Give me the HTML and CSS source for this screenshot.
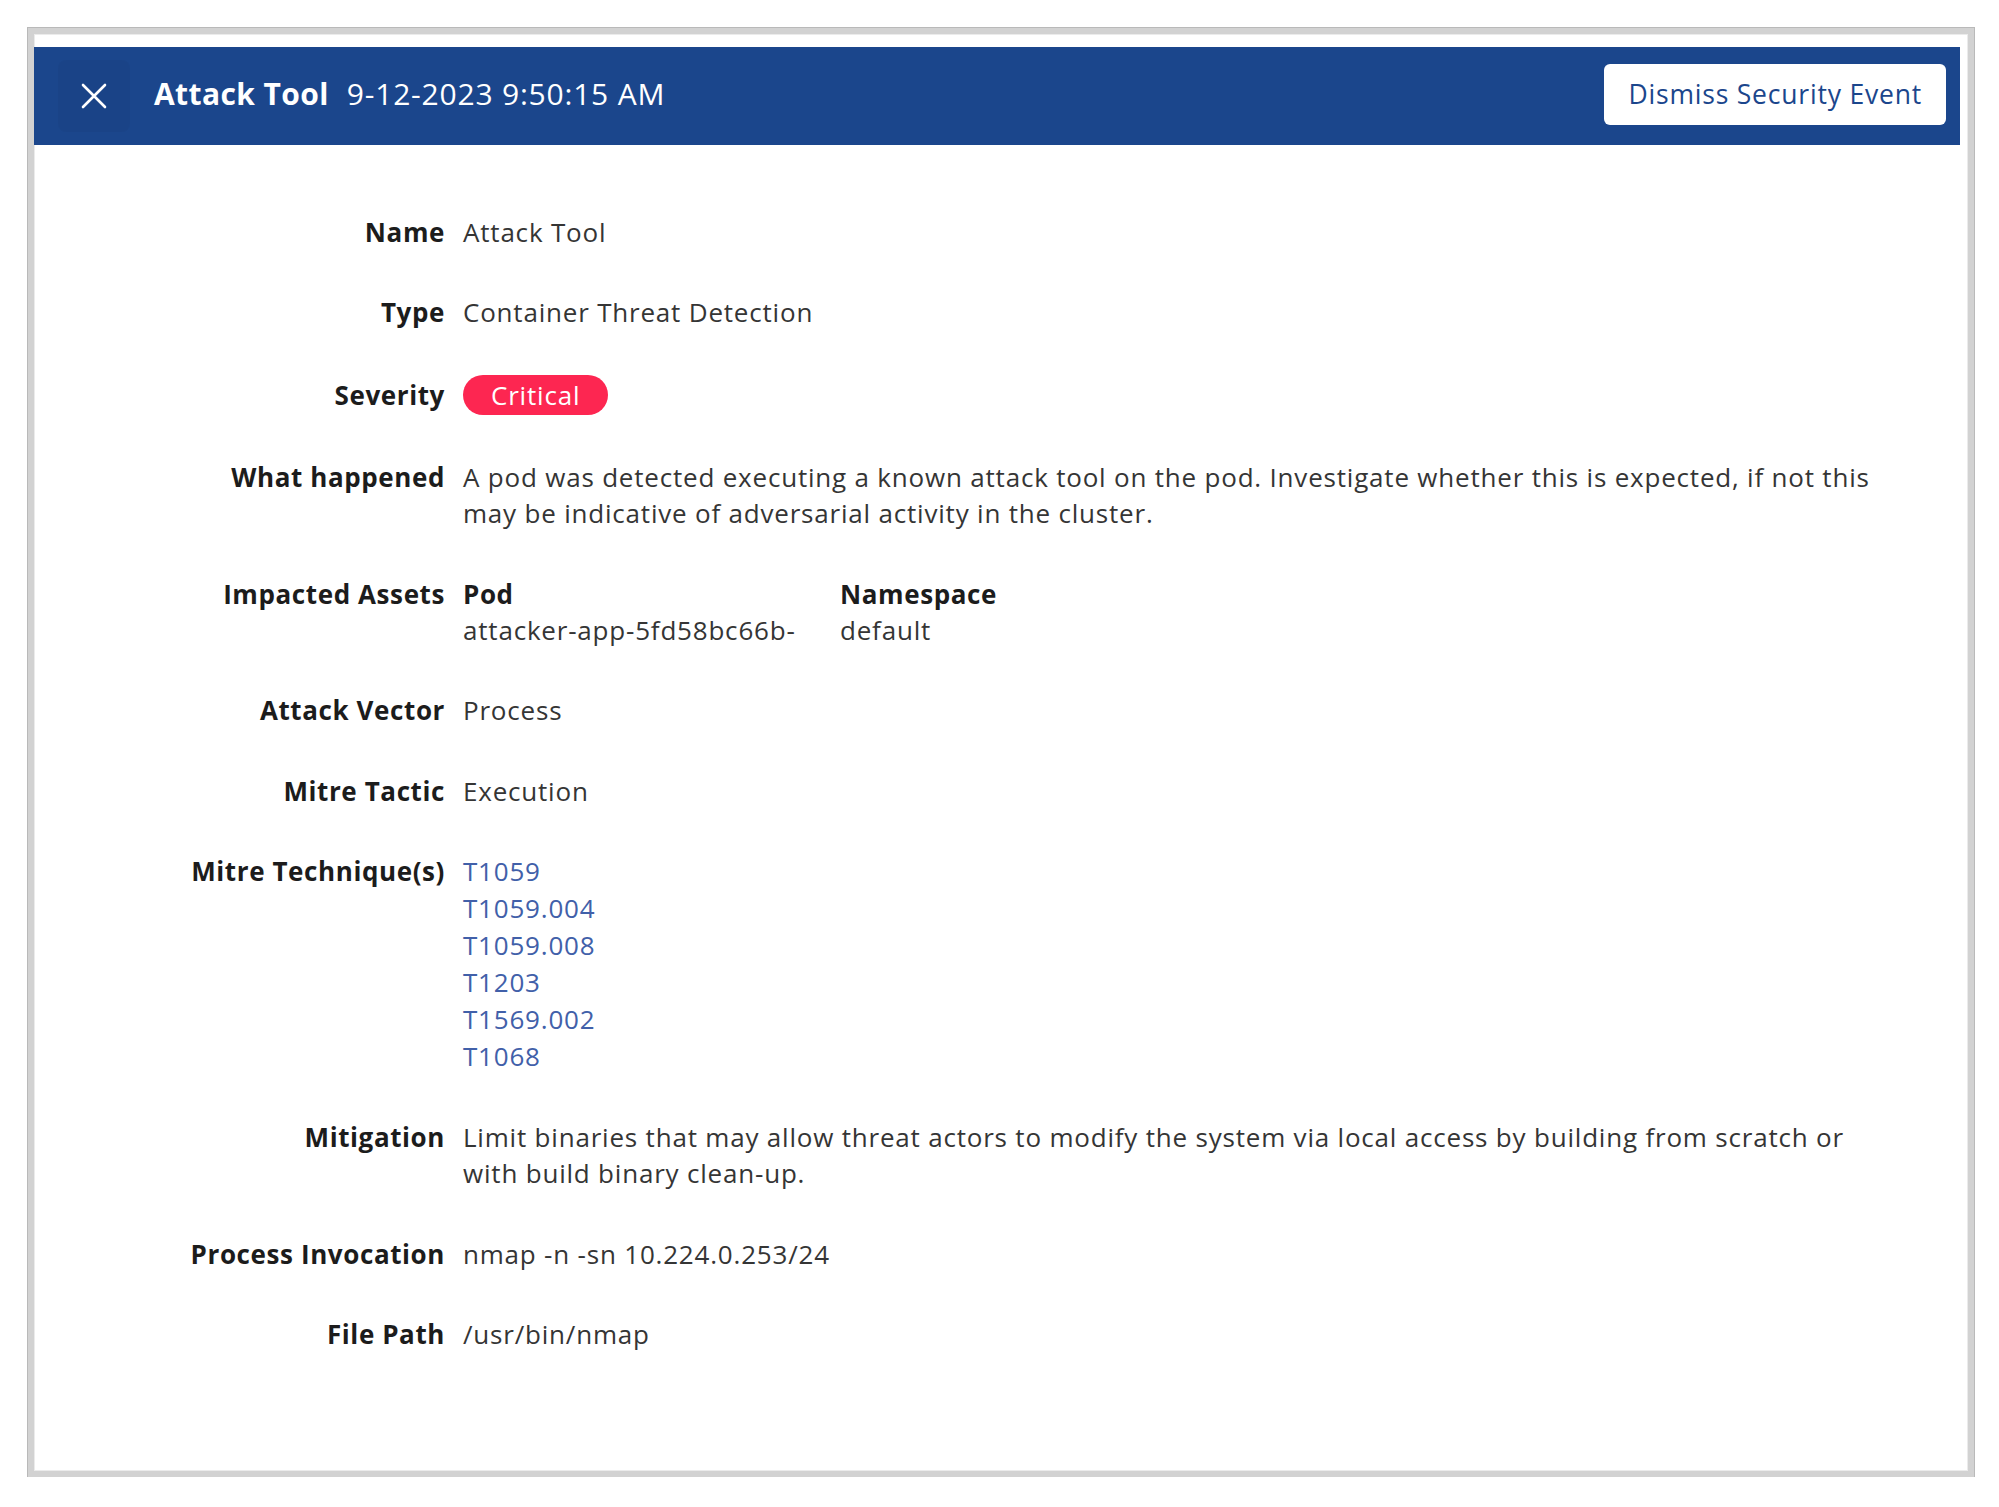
FILE: index.html
```html
<!DOCTYPE html>
<html lang="en">
<head>
<meta charset="utf-8">
<title>Attack Tool - Security Event</title>
<link rel="stylesheet" href="styles.css">
</head>
<body>
<div class="frame">
  <div class="panel">
    <header class="topbar">
      <div class="title-group">
        <button class="close-btn" aria-label="Close">
          <svg viewBox="0 0 28 28" width="28" height="28"><path d="M3 3 L25 25 M25 3 L3 25" stroke="#ffffff" stroke-width="2.6" stroke-linecap="round" fill="none"/></svg>
        </button>
        <h1 class="title"><span class="title-name">Attack Tool</span><span class="title-date">9-12-2023 9:50:15 AM</span></h1>
      </div>
      <button class="dismiss-btn">Dismiss Security Event</button>
    </header>
    <dl class="details">
      <dt>Name</dt>
      <dd>Attack Tool</dd>

      <dt>Type</dt>
      <dd>Container Threat Detection</dd>

      <dt class="badge-label">Severity</dt>
      <dd><span class="badge">Critical</span></dd>

      <dt>What happened</dt>
      <dd>A pod was detected executing a known attack tool on the pod. Investigate whether this is expected, if not this may be indicative of adversarial activity in the cluster.</dd>

      <dt>Impacted Assets</dt>
      <dd>
        <div class="assets">
          <div class="asset-head">Pod</div>
          <div class="asset-head">Namespace</div>
          <div class="asset-val pod">attacker-app-5fd58bc66b-</div>
          <div class="asset-val">default</div>
        </div>
      </dd>

      <dt>Attack Vector</dt>
      <dd>Process</dd>

      <dt>Mitre Tactic</dt>
      <dd>Execution</dd>

      <dt>Mitre Technique(s)</dt>
      <dd>
        <ul class="techniques">
          <li><a href="#">T1059</a></li>
          <li><a href="#">T1059.004</a></li>
          <li><a href="#">T1059.008</a></li>
          <li><a href="#">T1203</a></li>
          <li><a href="#">T1569.002</a></li>
          <li><a href="#">T1068</a></li>
        </ul>
      </dd>

      <dt>Mitigation</dt>
      <dd>Limit binaries that may allow threat actors to modify the system via local access by building from scratch or with build binary clean-up.</dd>

      <dt>Process Invocation</dt>
      <dd>nmap -n -sn 10.224.0.253/24</dd>

      <dt>File Path</dt>
      <dd>/usr/bin/nmap</dd>
    </dl>
  </div>
</div>
</body>
</html>
```

FILE: styles.css
```css
* { box-sizing: border-box; }

html, body {
  margin: 0;
  padding: 0;
  background: #ffffff;
}

body {
  font-family: "Open Sans", "Liberation Sans", sans-serif;
  color: #333333;
}

.frame {
  margin: 28px 0 0 28px;
  width: 1946px;
  height: 1449px;
  border: 6px solid #d2d2d2;
  box-shadow: 0 0 0 1px #b9b9b9, inset 0 0 0 1px #ebebeb;
  background: #ffffff;
}

.panel {
  padding: 13px 8px 0 0;
}

.topbar {
  height: 98px;
  background: #1b468c;
  display: flex;
  align-items: center;
  justify-content: space-between;
  padding: 0 14px 0 24px;
}

.title-group {
  display: flex;
  align-items: center;
  gap: 24px;
}

.close-btn {
  width: 72px;
  height: 72px;
  border: none;
  border-radius: 8px;
  background: rgba(0, 0, 0, 0.03);
  display: flex;
  align-items: center;
  justify-content: center;
  padding: 0;
  cursor: pointer;
}

.title {
  margin: 0 0 4px 0;
  color: #ffffff;
  font-size: 30px;
  line-height: 40px;
  display: flex;
  gap: 18px;
  letter-spacing: 0.4px;
}

.title-name { font-weight: 700; }
.title-date { font-weight: 500; letter-spacing: 0.8px; }

.dismiss-btn {
  height: 61px;
  margin-bottom: 4px;
  padding: 0 24px;
  border: none;
  border-radius: 6px;
  background: #ffffff;
  color: #1b468c;
  font-family: "Open Sans", "Liberation Sans", sans-serif;
  font-size: 26.5px;
  font-weight: 500;
  letter-spacing: 0.8px;
  cursor: pointer;
}

.details {
  margin: 0;
  padding: 69px 64px 0 0;
  display: grid;
  grid-template-columns: 411px 1fr;
  column-gap: 18px;
  row-gap: 43.9px;
  font-size: 26px;
  line-height: 36.5px;
  letter-spacing: 0.8px;
}

.details dt {
  text-align: right;
  font-weight: 700;
  color: #1c1c1c;
  letter-spacing: 0.6px;
}

.details dd {
  margin: 0;
  color: #353535;
}

.badge-label {
  line-height: 40px;
}

.badge {
  display: inline-block;
  height: 40px;
  line-height: 40px;
  padding: 0 28px;
  border-radius: 20px;
  background: #fd2651;
  color: #ffffff;
  font-weight: 500;
}

.assets {
  display: grid;
  grid-template-columns: 360px auto;
  column-gap: 17px;
  justify-content: start;
}

.asset-head {
  font-weight: 700;
  color: #1c1c1c;
  letter-spacing: 0.6px;
}

.asset-val.pod {
  white-space: nowrap;
  overflow: hidden;
}

.techniques {
  list-style: none;
  margin: 0;
  padding: 0;
}

.techniques li {
  height: 37px;
  line-height: 37px;
}

.techniques li:first-child {
  height: 36.5px;
  line-height: 36.5px;
}

.techniques a {
  color: #4160a9;
  text-decoration: none;
}
```
